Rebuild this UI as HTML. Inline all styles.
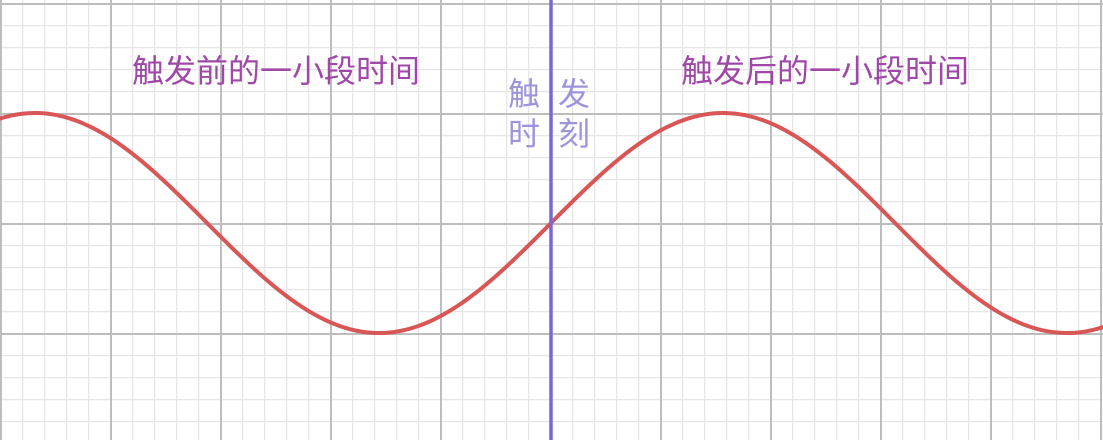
<!DOCTYPE html><html><head><style>
body{margin:0;width:1103px;height:440px;overflow:hidden;background:#fff;font-family:"Liberation Sans","Noto Sans CJK SC",sans-serif}
.t{position:absolute;color:#a048a8;font-size:32px;line-height:1;white-space:nowrap}
.v{position:absolute;color:#9d95dc;font-size:32px;line-height:40px;width:34px}
</style></head><body>
<svg width="1103" height="440" style="position:absolute;left:0;top:0">
<defs>
<pattern id="mi" width="22" height="22" patternUnits="userSpaceOnUse" x="0" y="3"><path d="M0 0.5H22M0.5 0V22" stroke="#e6e6e6" stroke-width="1.5" fill="none"/></pattern>
<pattern id="ma" width="110" height="110" patternUnits="userSpaceOnUse" x="0" y="3"><path d="M0 1H110M1 0V110" stroke="#bdbdbd" stroke-width="2" fill="none"/></pattern>
</defs>
<rect width="1103" height="440" fill="url(#mi)"/>
<rect width="1103" height="440" fill="url(#ma)"/>
<path id="s" fill="none" stroke="#d85656" stroke-width="4" d=""/>
<line x1="551" y1="0" x2="551" y2="440" stroke="#7b66d6" stroke-width="3.5"/>
</svg>
<script>
var d="";for(var x=-2;x<=1105;x+=3){var y=223-110*Math.sin(2*Math.PI*(x-551)/688);d+=(x==-2?"M":"L")+x+" "+y.toFixed(2);}document.getElementById("s").setAttribute("d",d);
</script>
<div class="t" style="left:132px;top:55px">触发前的一小段时间</div>
<div class="t" style="left:681px;top:55px">触发后的一小段时间</div>
<div class="v" style="left:508px;top:74px">触<br>时</div>
<div class="v" style="left:558px;top:74px">发<br>刻</div>
</body></html>
